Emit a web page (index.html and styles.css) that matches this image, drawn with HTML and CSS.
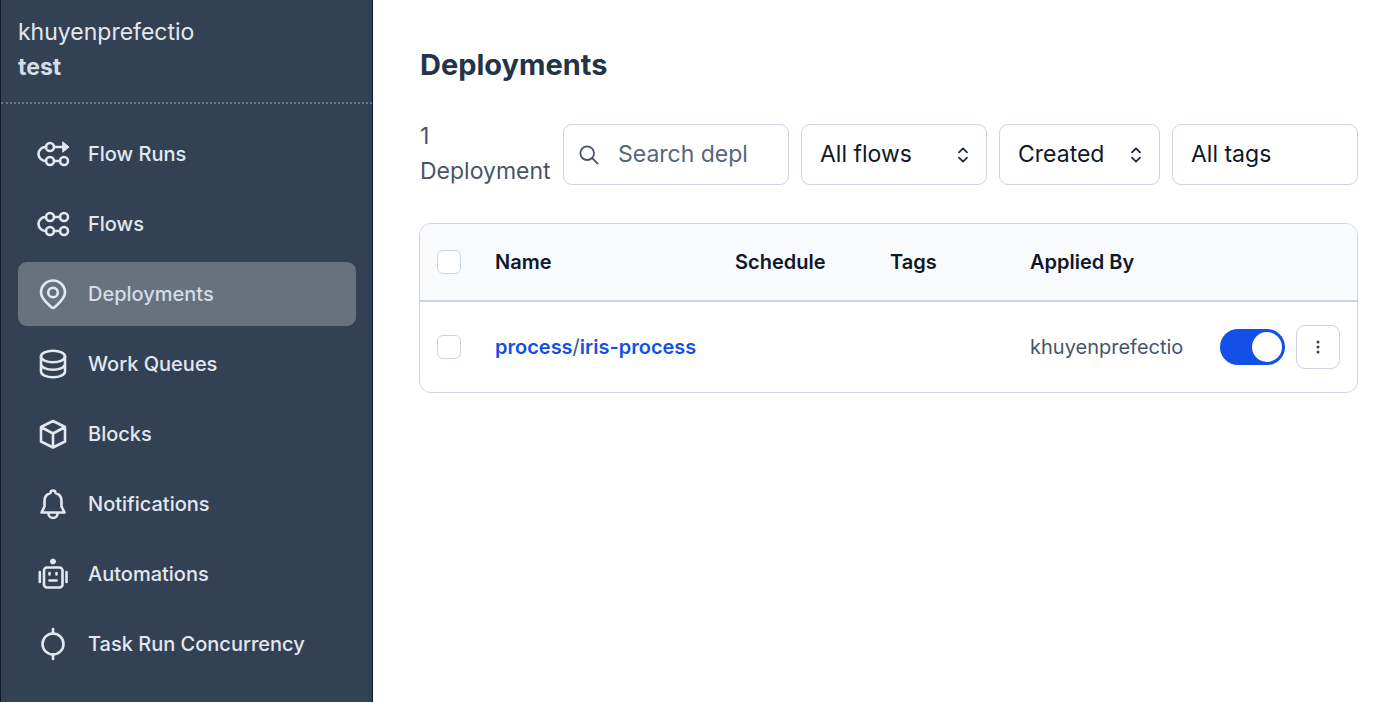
FILE: index.html
```html
<!DOCTYPE html>
<html lang="en">
<head>
<meta charset="utf-8">
<meta name="viewport" content="width=device-width, initial-scale=1">
<title>Deployments</title>
<link rel="stylesheet" href="styles.css">
</head>
<body>
<div class="app">
  <aside class="sidebar">
    <div class="workspace">
      <div class="workspace-owner">khuyenprefectio</div>
      <div class="workspace-name">test</div>
    </div>
    <nav class="nav">
      <a class="nav-item" href="#">
        <svg class="nav-icon" viewBox="0 0 36 36"><circle cx="15" cy="11" r="4"/><circle cx="15" cy="25" r="4"/><circle cx="29" cy="25" r="4"/><path d="M19 11h9M19 25h6M11 11h-.5a7 7 0 0 0 0 14h.5"/><path class="solid" d="M28 6l6 5-6 5z"/></svg>
        Flow Runs</a>
      <a class="nav-item" href="#">
        <svg class="nav-icon" viewBox="0 0 36 36"><circle cx="15" cy="11" r="4"/><circle cx="29" cy="11" r="4"/><circle cx="15" cy="25" r="4"/><circle cx="29" cy="25" r="4"/><path d="M19 11h6M19 25h6M11 11h-.5a7 7 0 0 0 0 14h.5"/></svg>
        Flows</a>
      <a class="nav-item nav-item-active" href="#" aria-current="page">
        <svg class="nav-icon" viewBox="0 0 36 36"><path d="M18 32c-1 0-2-1-3-2C10 25.500 6 21.500 6 16.500a12 12 0 0 1 24 0c0 5-4 9-9 13.500-1 1-2 2-3 2z"/><circle cx="18" cy="16.500" r="4.800"/></svg>
        Deployments</a>
      <a class="nav-item" href="#">
        <svg class="nav-icon" viewBox="0 0 36 36"><ellipse cx="18" cy="10.500" rx="12" ry="5.800"/><path d="M6 10.500v15c0 3.200 5.400 5.800 12 5.800s12-2.600 12-5.800v-15M6 18c0 3.200 5.400 5.800 12 5.800S30 21.200 30 18"/></svg>
        Work Queues</a>
      <a class="nav-item" href="#">
        <svg class="nav-icon" viewBox="0 0 36 36"><path d="M18 5l12 6v14.500l-12 6-12-6V11zM6 11l12 6.500L30 11M18 17.500v14"/></svg>
        Blocks</a>
      <a class="nav-item" href="#">
        <svg class="nav-icon" viewBox="0 0 36 36"><path d="M6.500 26.500l3-6V15c0-4 2.500-7 6-8a2.500 2.500 0 0 1 5 0c3.500 1 6 4 6 8v5.500l3 6zM13.500 27.500a4.500 4.500 0 0 0 9 0"/></svg>
        Notifications</a>
      <a class="nav-item" href="#">
        <svg class="nav-icon" viewBox="0 0 36 36"><circle class="solid" cx="18" cy="5.500" r="2.500"/><rect x="9" y="11.500" width="18.500" height="20" rx="3"/><path d="M4.800 16v10M31.500 16v10M14.500 17v1.500M21.500 17v1.500"/><path d="M14.500 24.500h7"/></svg>
        Automations</a>
      <a class="nav-item" href="#">
        <svg class="nav-icon" viewBox="0 0 36 36"><circle cx="18" cy="18" r="10.500"/><path d="M18 3v4.500M18 28.500V33"/></svg>
        Task Run Concurrency</a>
    </nav>
  </aside>

  <main class="main">
    <h1 class="title">Deployments</h1>
    <div class="filters">
      <div class="count">1 Deployment</div>
      <label class="field field-search">
        <svg class="search-icon" viewBox="0 0 22 22"><circle cx="9" cy="9" r="7.500"/><path d="M14.500 14.500l6 6"/></svg>
        <input class="search-input" type="text" placeholder="Search deployments" aria-label="Search deployments">
      </label>
      <div class="field">
        <select class="select" aria-label="Flows"><option>All flows</option></select>
        <svg class="chevrons" viewBox="0 0 12 18"><path d="M1.500 6L6 1.500 10.500 6M1.500 12L6 16.500l4.500-4.500"/></svg>
      </div>
      <div class="field">
        <select class="select" aria-label="Sort"><option>Created</option></select>
        <svg class="chevrons" viewBox="0 0 12 18"><path d="M1.500 6L6 1.500 10.500 6M1.500 12L6 16.500l4.500-4.500"/></svg>
      </div>
      <div class="field">
        <select class="select" aria-label="Tags"><option>All tags</option></select>
      </div>
    </div>

    <div class="card">
      <table class="table">
        <colgroup><col class="col-check"><col class="col-name"><col class="col-schedule"><col class="col-tags"><col class="col-applied"><col class="col-actions"></colgroup>
        <thead>
          <tr>
            <th class="cell-check"><input class="checkbox" type="checkbox" aria-label="Select all deployments"></th>
            <th scope="col">Name</th><th scope="col">Schedule</th><th scope="col">Tags</th><th scope="col">Applied By</th><th></th>
          </tr>
        </thead>
        <tbody>
          <tr>
            <td class="cell-check"><input class="checkbox" type="checkbox" aria-label="Select iris-process"></td>
            <td><a class="link" href="#">process</a>/<a class="link" href="#">iris-process</a></td>
            <td></td><td></td>
            <td>khuyenprefectio</td>
            <td>
              <div class="actions">
                <input class="toggle" type="checkbox" role="switch" aria-label="Deployment active" checked>
                <button class="menu-button" type="button" aria-label="More actions">
                  <svg class="dots" viewBox="0 0 4 14"><circle cx="2" cy="2" r="1.500"/><circle cx="2" cy="7" r="1.500"/><circle cx="2" cy="12" r="1.500"/></svg>
                </button>
              </div>
            </td>
          </tr>
        </tbody>
      </table>
    </div>
  </main>
</div>
</body>
</html>
```
FILE: styles.css
```css
*, *::before, *::after { box-sizing: border-box; }

body {
  margin: 0;
  font-family: Inter, "Liberation Sans", sans-serif;
  color: #475569;
  background: #fff;
}

.app { display: flex; min-height: 100vh; }

.sidebar {
  flex: 0 0 373px;
  background: #334155;
  color: #e2e8f0;
  border: solid #0f172a;
  border-width: 0 1px;
}

.workspace {
  padding: 15px 17px 17px;
  border-bottom: 2px dotted #64748b;
  font-size: 23px;
  line-height: 35px;
}
.workspace-name { font-weight: 700; color: #d5dde8; }

.nav { display: flex; flex-direction: column; gap: 6px; padding: 18px 16px 16px 17px; }
.nav-item {
  display: flex;
  align-items: center;
  gap: 17px;
  height: 64px;
  padding: 0 17px 1px;
  border-radius: 9px;
  font-size: 20px;
  font-weight: 500;
  color: #e2e8f0;
  text-decoration: none;
}
.nav-item-active { background: #67727f; color: #d5dde8; }
.nav-icon {
  width: 36px;
  height: 36px;
  fill: none;
  stroke: #e2e8f0;
  stroke-width: 2.6;
  stroke-linecap: round;
  stroke-linejoin: round;
}
.solid { fill: #e2e8f0; stroke-width: 1; }

.main { flex: 1; min-width: 0; padding: 45px 42px 44px 46px; }
.title { margin: 0 0 39px; padding-left: 1px; font-size: 29px; line-height: 40px; font-weight: 700; color: #253348; }

.filters {
  display: grid;
  grid-template-columns: 132px minmax(0, 226fr) minmax(0, 186fr) minmax(0, 161fr) minmax(0, 186fr);
  align-items: center;
  gap: 12px;
  margin-bottom: 38px;
}
.count { padding-left: 1px; font-size: 23px; line-height: 35px; margin: -5px 0 -4px; }
.field {
  display: flex;
  align-items: center;
  position: relative;
  height: 61px;
  min-width: 0;
  border: 1px solid #cbd5e1;
  border-radius: 9px;
  color: #0f172a;
}
.field-search { padding: 0 40px 0 15px; gap: 19px; }

.search-icon { flex: none; width: 20px; height: 20px; fill: none; stroke: #475569; stroke-width: 2; stroke-linecap: round; }
.search-input {
  flex: 1;
  min-width: 0;
  padding: 0;
  border: 0;
  outline: 0;
  background: none;
  font: inherit;
  font-size: 23px;
  line-height: 35px;
  color: #0f172a;
}
.search-input::placeholder { color: #56667c; opacity: 1; }

.select {
  appearance: none;
  width: 100%;
  height: 100%;
  padding: 0 18px 2px;
  border: 0;
  background: none;
  font: inherit;
  font-size: 23px;
  color: #0f172a;
}
.chevrons {
  position: absolute;
  right: 17px;
  width: 12px;
  height: 16px;
  fill: none;
  stroke: #1e293b;
  stroke-width: 2;
  stroke-linecap: round;
  stroke-linejoin: round;
  pointer-events: none;
}

.card { border: 1px solid #cbd5e1; border-radius: 12px; overflow: hidden; }
.table { width: 100%; table-layout: fixed; border-collapse: collapse; font-size: 20px; line-height: 28px; }
.table th, .table td { padding: 0; text-align: left; white-space: nowrap; }
.table th { height: 77px; font-weight: 600; color: #0f172a; background: #f8fafc; border-bottom: 2px solid #cbd5e1; }
.table td { height: 91px; padding-bottom: 1px; }
.table .cell-check { padding-left: 17px; }
.col-check { width: 75px; }
.col-name { width: 240px; }
.col-schedule { width: 155px; }
.col-tags { width: 140px; }
.col-applied { width: 190px; }

.checkbox {
  appearance: none;
  display: block;
  width: 24px;
  height: 24px;
  margin: 0;
  border: 1px solid #cbd5e1;
  border-radius: 6px;
  background: #fff;
}
.link { color: #1350e8; font-weight: 600; text-decoration: none; }

.actions { display: flex; align-items: center; justify-content: flex-end; gap: 11px; padding-right: 17px; }
.toggle {
  appearance: none;
  flex: none;
  display: flex;
  align-items: center;
  justify-content: flex-end;
  width: 65px;
  height: 36px;
  margin: 0;
  padding: 3px;
  border-radius: 18px;
  background: #1350e8;
}
.toggle::before { content: ""; width: 30px; height: 30px; border-radius: 50%; background: #fff; }
.menu-button {
  display: grid;
  place-items: center;
  flex: none;
  width: 44px;
  height: 44px;
  padding: 0;
  border: 1px solid #cbd5e1;
  border-radius: 9px;
  background: #fff;
}
.dots { width: 4px; height: 14px; fill: #334155; }
```
